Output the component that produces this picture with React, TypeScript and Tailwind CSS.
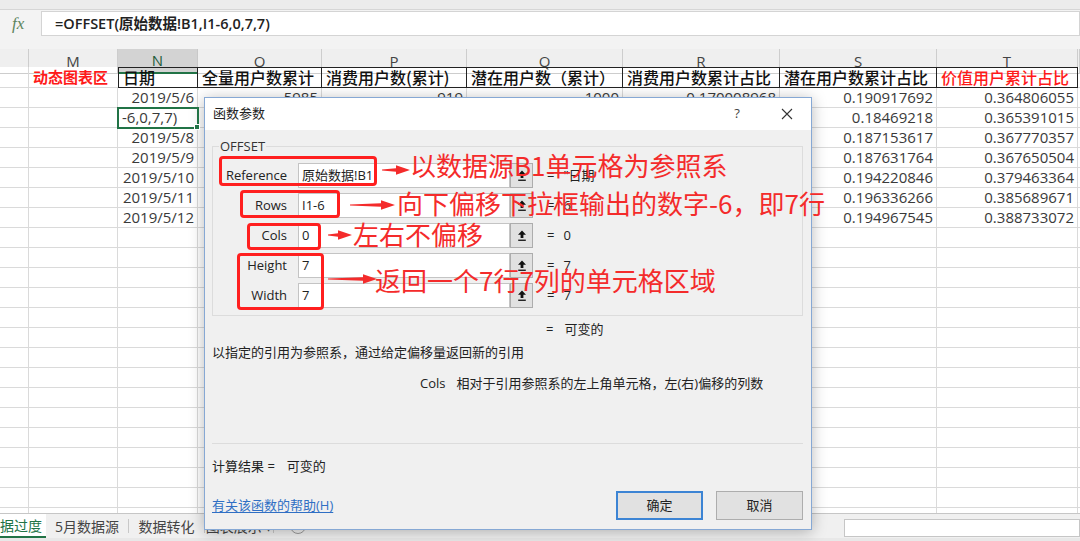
import type { ReactNode } from 'react';

const GRID = 'grid grid-cols-[29px_89px_80px_124px_145px_156px_157px_157px_141px_1fr]';

const letters = ['', 'M', 'N', 'O', 'P', 'Q', 'R', 'S', 'T', ''];
const heads = ['', '动态图表区', '日期', '全量用户数累计', '消费用户数(累计)', '潜在用户数（累计）', '消费用户数累计占比', '潜在用户数累计占比', '价值用户累计占比', ''];

type Row = { n?: string; o?: string; p?: string; q?: string; r?: string; s?: string; t?: string; edit?: boolean };

const data: Row[] = [
    { n: '2019/5/6', o: '5985', p: '919', q: '1000', r: '0.170008968', s: '0.190917692', t: '0.364806055' },
    { n: '-6,0,7,7)', s: '0.18469218', t: '0.365391015', edit: true },
    { n: '2019/5/8', s: '0.187153617', t: '0.367770357' },
    { n: '2019/5/9', s: '0.187631764', t: '0.367650504' },
    { n: '2019/5/10', s: '0.194220846', t: '0.379463364' },
    { n: '2019/5/11', s: '0.196336266', t: '0.385689671' },
    { n: '2019/5/12', s: '0.194967545', t: '0.388733072' },
];
while (data.length < 22) data.push({});

const fields = [
    { label: 'Reference', value: '原始数据!B1', result: '"日期' },
    { label: 'Rows', value: 'I1-6', result: '6' },
    { label: 'Cols', value: '0', result: '0' },
    { label: 'Height', value: '7', result: '7' },
    { label: 'Width', value: '7', result: '7' },
];

function DataRow({ row }: { row: Row }) {
    const vals = ['', '', row.n ?? '', row.o ?? '', row.p ?? '', row.q ?? '', row.r ?? '', row.s ?? '', row.t ?? '', ''];
    return (
        <div className={`${GRID} h-[20px]`}>
            {vals.map((v, i) => {
                if (i === 2 && row.edit) {
                    return (
                        <div key={i} className="relative z-10 border-r border-b border-[#dadada] outline-2 outline-[#217346] -outline-offset-1 pl-[4px] leading-[19px] whitespace-nowrap">
                            {v}
                            <span className="absolute -right-[3px] -bottom-[3px] w-[6px] h-[6px] bg-[#217346] border border-white" />
                        </div>
                    );
                }
                return (
                    <div key={i} className="border-r border-b border-[#dadada] text-right pr-[3px] leading-[19px] whitespace-nowrap overflow-hidden">
                        {v}
                    </div>
                );
            })}
        </div>
    );
}

function UpArrow() {
    return (
        <svg width="10" height="12" viewBox="0 0 10 12">
            <path d="M5 0.5 L9 4.8 H6.4 V8 H3.6 V4.8 H1 Z" fill="#111" />
            <rect x="1.2" y="9.6" width="7.6" height="1.3" fill="#111" />
        </svg>
    );
}

function Arrow({ className, w }: { className: string; w: number }) {
    return (
        <svg className={`absolute ${className}`} width={w} height="12" viewBox={`0 0 ${w} 12`}>
            <polygon fill="#f42b2b" points={`0,5.4 ${w - 14},4.2 ${w - 14},1.2 ${w},6 ${w - 14},10.8 ${w - 14},7.8 0,6.6`} />
        </svg>
    );
}

function Note({ className, children }: { className: string; children: ReactNode }) {
    return (
        <div className={`absolute text-[26px] leading-[26px] text-[#f42b2b] whitespace-nowrap font-['Noto_Sans_CJK_SC',sans-serif] ${className}`}>
            {children}
        </div>
    );
}

function Dialog() {
    return (
        <div className="absolute left-[204px] top-[97px] w-[608px] h-[433px] border border-[#86a8d4] bg-[#f0f0f0] shadow-[0_2px_14px_rgba(0,0,0,0.28)] text-[13px] text-[#222]">
            <div className="h-[32px] bg-white flex items-center pl-[8px]">
                <span>函数参数</span>
                <div className="ml-auto flex items-center gap-[20px] pr-[9px]">
                    <span className="w-[30px] text-center text-[#444]">?</span>
                    <span className="w-[30px] flex justify-center">
                        <svg width="12" height="12" viewBox="0 0 12 12">
                            <path d="M1 1 L11 11 M11 1 L1 11" stroke="#333" strokeWidth="1.1" />
                        </svg>
                    </span>
                </div>
            </div>

            <div className="pl-[7px] pr-[8px] pt-[8px]">
                <fieldset className="border border-[#dcdcdc] pt-[8px] pb-[7px]">
                    <legend className="ml-[6px] px-[1px] leading-[17px] text-[#333]">OFFSET</legend>
                    <div className="flex flex-col gap-[5px]">
                        {fields.map((f) => (
                            <div key={f.label} className="flex items-center h-[25px]">
                                <div className="w-[74px] text-right">{f.label}</div>
                                <div className="ml-[11px] w-[212px] h-full bg-white border border-[#c4c4c4] pl-[3px] flex items-center">{f.value}</div>
                                <div className="w-[23px] h-full bg-[#e1e1e1] border border-[#adadad] flex items-center justify-center">
                                    <UpArrow />
                                </div>
                                <span className="ml-[14px]">=</span>
                                <span className="ml-[9px]">{f.result}</span>
                            </div>
                        ))}
                    </div>
                </fieldset>

                <div className="mt-[5px] h-[18px] flex items-center pl-[334px]">
                    <span>=</span>
                    <span className="ml-[11px]">可变的</span>
                </div>
                <div className="mt-[5px] h-[18px] flex items-center">以指定的引用为参照系，通过给定偏移量返回新的引用</div>
                <div className="mt-[13px] h-[18px] flex items-center pl-[208px]">
                    <span>Cols</span>
                    <span className="ml-[11px]">相对于引用参照系的左上角单元格，左(右)偏移的列数</span>
                </div>
                <div className="mt-[50px] border-t border-[#dcdcdc]" />
                <div className="mt-[14px] h-[18px] flex items-center">
                    <span>计算结果 =</span>
                    <span className="ml-[12px]">可变的</span>
                </div>
                <div className="mt-[15px] h-[29px] flex items-center">
                    <span className="text-[#2f6fc4] underline underline-offset-2">有关该函数的帮助(H)</span>
                    <div className="ml-auto flex gap-[13px]">
                        <button className="w-[87px] h-[29px] bg-[#e1e1e1] border-2 border-[#3c84d4]">确定</button>
                        <button className="w-[87px] h-[29px] bg-[#e1e1e1] border border-[#adadad]">取消</button>
                    </div>
                </div>
            </div>

            <div className="absolute left-[14px] top-[58px] w-[158px] h-[30px] border-[3px] border-[#ff1f1f] rounded-[4px]" />
            <div className="absolute left-[35px] top-[92px] w-[100px] h-[28px] border-[3px] border-[#ff1f1f] rounded-[4px]" />
            <div className="absolute left-[42px] top-[125px] w-[74px] h-[27px] border-[3px] border-[#ff1f1f] rounded-[4px]" />
            <div className="absolute left-[32px] top-[155px] w-[87px] h-[57px] border-[3px] border-[#ff1f1f] rounded-[4px]" />

            <Arrow className="left-[177px] top-[66px]" w={28} />
            <Arrow className="left-[145px] top-[101px]" w={45} />
            <Arrow className="left-[123px] top-[131px]" w={24} />
            <Arrow className="left-[123px] top-[175px]" w={49} />

            <Note className="left-[205px] top-[54px]">以数据源B1单元格为参照系</Note>
            <Note className="left-[192px] top-[92px]">向下偏移下拉框输出的数字-6，即7行</Note>
            <Note className="left-[148px] top-[123px]">左右不偏移</Note>
            <Note className="left-[170px] top-[169px]">返回一个7行7列的单元格区域</Note>
        </div>
    );
}

export default function App() {
    return (
        <div className="relative w-[1080px] h-[541px] overflow-hidden bg-white flex flex-col font-['Open_Sans','Noto_Sans_CJK_SC',sans-serif] text-[#333]">
            <div className="h-[10px] bg-[#ececec] border-b border-[#d6d6d6]" />

            <div className="h-[27px] flex bg-[#f3f3f3] py-[1px]">
                <div className="w-[41px] flex items-center pl-[12px] text-[17px] italic text-[#5d855d] font-['Liberation_Serif',serif]">fx</div>
                <div className="flex-1 bg-white border border-[#d4d4d4] flex items-center pl-[13px] text-[14.5px] font-semibold text-[#222]">
                    =OFFSET(原始数据!B1,I1-6,0,7,7)
                </div>
            </div>

            <div className="h-[12px] bg-[#f3f3f3]" />

            <div className="flex-1 overflow-hidden text-[15px] text-[#3a3a3a]">
                <div className={`${GRID} h-[18px] bg-[#efefef]`}>
                    {letters.map((l, i) => (
                        <div
                            key={i}
                            className={
                                l === 'N'
                                    ? 'flex items-center justify-center border-r border-b-2 border-r-[#c8c8c8] border-b-[#217346] bg-[#d3d3d3] text-[#1f5b3a]'
                                    : 'flex items-center justify-center border-r border-b border-[#cdcdcd] text-[#444]'
                            }
                        >
                            {l}
                        </div>
                    ))}
                </div>

                <div className={`${GRID} h-[21px]`}>
                    {heads.map((h, i) => {
                        if (i >= 2 && i <= 8) {
                            return (
                                <div
                                    key={i}
                                    className={`border-t border-b border-r border-[#222] ${i === 2 ? 'border-l' : ''} pl-[4px] text-[16px] leading-[19px] font-medium whitespace-nowrap font-['Noto_Sans_CJK_SC',sans-serif] ${i === 8 ? 'text-[#ff1a1a]' : 'text-[#111]'}`}
                                >
                                    {h}
                                </div>
                            );
                        }
                        return (
                            <div key={i} className={`border-b ${i === 1 ? '' : 'border-r'} border-[#dadada] pl-[4px] text-[15px] leading-[19px] font-bold text-[#ff1a1a] whitespace-nowrap font-['Noto_Sans_CJK_SC',sans-serif]`}>
                                {h}
                            </div>
                        );
                    })}
                </div>

                {data.map((row, i) => (
                    <DataRow key={i} row={row} />
                ))}
            </div>

            <div className="h-[25px] flex bg-[#f0f0f0] border-t border-[#c6c6c6] text-[14px] text-[#444]">
                <div className="w-[46px] bg-white border-b-2 border-[#217346] text-[#217346] flex items-center whitespace-nowrap overflow-hidden">据过度</div>
                <div className="w-[82px] flex items-center justify-center">
                    <span>5月数据源</span>
                </div>
                <div className="my-[5px] border-l border-[#c8c8c8]" />
                <div className="w-[75px] flex items-center justify-center">数据转化</div>
                <div className="my-[5px] border-l border-[#c8c8c8]" />
                <div className="w-[68px] flex items-center justify-center">图表展示 ▾</div>
                <div className="my-[5px] border-l border-[#c8c8c8]" />
                <div className="ml-[16px] flex items-center">
                    <span className="w-[16px] h-[16px] rounded-full border border-[#999] flex items-center justify-center text-[12px] leading-none">+</span>
                </div>
                <div className="ml-auto mt-[5px] w-[236px] h-[18px] bg-white border border-[#c6c6c6]" />
            </div>

            <div className="h-[3px] bg-[#e8e8e8]" />

            <Dialog />
        </div>
    );
}
